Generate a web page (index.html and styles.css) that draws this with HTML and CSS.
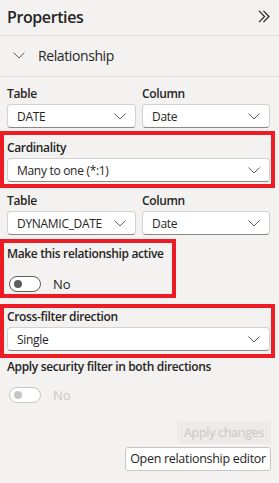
FILE: index.html
```html
<!DOCTYPE html>
<html lang="en">
<head>
<meta charset="utf-8">
<title>Properties</title>
<link rel="stylesheet" href="styles.css">
</head>
<body>
<div class="pane">
  <div class="header">
    <span class="title">Properties</span>
    <svg class="collapse" width="13" height="13" viewBox="0 0 13 13"><path d="M1 0.8 L6.6 6.5 L1 12.2 M5.4 0.8 L11 6.5 L5.4 12.2" fill="none" stroke="#252423" stroke-width="1.2"/></svg>
  </div>
  <div class="section-head">
    <svg class="chev-down" width="12" height="7" viewBox="0 0 12 7"><path d="M0.5 0.5 L6 6 L11.5 0.5" fill="none" stroke="#605e5c" stroke-width="1"/></svg>
    <span class="section-title">Relationship</span>
  </div>
  <div class="content">
    <div class="pair first">
      <div class="field">
        <div class="label">Table</div>
        <div class="select"><span>DATE</span><svg class="chev" width="12" height="7" viewBox="0 0 12 7"><path d="M0.5 0.5 L6 6 L11.5 0.5" fill="none" stroke="#605e5c" stroke-width="1"/></svg></div>
      </div>
      <div class="field">
        <div class="label">Column</div>
        <div class="select"><span>Date</span><svg class="chev" width="12" height="7" viewBox="0 0 12 7"><path d="M0.5 0.5 L6 6 L11.5 0.5" fill="none" stroke="#605e5c" stroke-width="1"/></svg></div>
      </div>
    </div>

    <div class="highlight wide card">
      <div class="label">Cardinality</div>
      <div class="select"><span>Many to one (*:1)</span><svg class="chev" width="12" height="7" viewBox="0 0 12 7"><path d="M0.5 0.5 L6 6 L11.5 0.5" fill="none" stroke="#605e5c" stroke-width="1"/></svg></div>
    </div>

    <div class="pair second">
      <div class="field">
        <div class="label">Table</div>
        <div class="select"><span>DYNAMIC_DATE</span><svg class="chev" width="12" height="7" viewBox="0 0 12 7"><path d="M0.5 0.5 L6 6 L11.5 0.5" fill="none" stroke="#605e5c" stroke-width="1"/></svg></div>
      </div>
      <div class="field">
        <div class="label">Column</div>
        <div class="select"><span>Date</span><svg class="chev" width="12" height="7" viewBox="0 0 12 7"><path d="M0.5 0.5 L6 6 L11.5 0.5" fill="none" stroke="#605e5c" stroke-width="1"/></svg></div>
      </div>
    </div>

    <div class="highlight narrow active">
      <div class="label">Make this relationship active</div>
      <div class="toggle-row">
        <span class="toggle"><span class="knob"></span></span>
        <span class="toggle-text">No</span>
      </div>
    </div>

    <div class="highlight wide cross">
      <div class="label">Cross-filter direction</div>
      <div class="select"><span>Single</span><svg class="chev" width="12" height="7" viewBox="0 0 12 7"><path d="M0.5 0.5 L6 6 L11.5 0.5" fill="none" stroke="#605e5c" stroke-width="1"/></svg></div>
    </div>

    <div class="security">
      <div class="label">Apply security filter in both directions</div>
      <div class="toggle-row disabled">
        <span class="toggle"><span class="knob"></span></span>
        <span class="toggle-text">No</span>
      </div>
    </div>

    <div class="actions">
      <button class="btn apply" disabled>Apply changes</button>
      <button class="btn editor">Open relationship editor</button>
    </div>
  </div>
</div>
</body>
</html>
```
FILE: styles.css
```css
* { box-sizing: border-box; }
html, body { margin: 0; padding: 0; }
body {
  background: #f3f2f1;
  font-family: "Open Sans", "Noto Sans", sans-serif;
  color: #252423;
  width: 279px;
  height: 483px;
  overflow: hidden;
}
.pane { width: 279px; }
.header {
  height: 36px;
  display: flex;
  align-items: center;
  justify-content: space-between;
  padding: 0 8px 1px 7px;
  border-bottom: 1px solid #e1dfdd;
}
.title {
  font-size: 16px;
  font-weight: 600;
  letter-spacing: -0.4px;
  line-height: 20px;
}
.collapse { display: block; margin-top: -1px; }
.section-head {
  height: 41px;
  display: flex;
  align-items: center;
  padding: 0 0 1px 13px;
  border-bottom: 1px solid #e1dfdd;
}
.chev-down { display: block; margin-right: 13px; }
.section-title {
  font-size: 14px;
  line-height: 20px;
  letter-spacing: -0.4px;
}
.content {
  padding: 0 9px 0 7px;
  display: flex;
  flex-direction: column;
}
.pair {
  display: grid;
  grid-template-columns: 129px 128px;
  column-gap: 6px;
}
.pair.first { margin-top: 8px; }
.pair.second { margin-top: 8px; }
.field { display: flex; flex-direction: column; }
.label {
  font-size: 12px;
  font-weight: 600;
  line-height: 17px;
  letter-spacing: -0.35px;
  white-space: nowrap;
}
.select {
  margin-top: 2px;
  height: 24px;
  background: #fff;
  border: 1px solid #d1d1d1;
  border-bottom-color: #8a8886;
  border-radius: 4px;
  display: flex;
  align-items: center;
  justify-content: space-between;
  padding: 0 9px 0 9px;
  font-size: 12px;
  letter-spacing: -0.3px;
  white-space: nowrap;
}
.chev { display: block; flex: none; }
.highlight {
  outline: 4px solid #ed1c24;
  margin-left: -3px;
  padding-left: 3px;
}
.highlight.wide { margin-right: -1px; padding-right: 1px; }
.highlight.narrow { width: 168px; }
.card { margin-top: 7px; padding-top: 4px; padding-bottom: 2px; }
.active { margin-top: 8px; padding-top: 2px; height: 51px; }
.cross { margin-top: 14px; padding-bottom: 3px; }
.toggle-row {
  display: flex;
  align-items: center;
  margin-top: 14px;
  padding-left: 2px;
}
.toggle {
  width: 32px;
  height: 16px;
  border: 1px solid #605e5c;
  border-radius: 8px;
  background: #fff;
  display: flex;
  align-items: center;
  padding-left: 4px;
}
.knob {
  width: 8px;
  height: 8px;
  border-radius: 50%;
  background: #605e5c;
}
.toggle-text {
  font-size: 13px;
  margin-left: 12px;
  line-height: 16px;
}
.security { margin-top: 4px; }
.security .toggle-row { margin-top: 12px; }
.disabled .toggle { border-color: #c8c6c4; }
.disabled .knob { background: #c8c6c4; }
.disabled .toggle-text { color: #c8c6c4; }
.actions {
  display: flex;
  flex-direction: column;
  align-items: flex-end;
  margin-top: 18px;
  margin-right: -1px;
}
.btn {
  font-family: "Open Sans", "Noto Sans", sans-serif;
  font-size: 12.5px;
  letter-spacing: -0.3px;
  height: 23px;
  border-radius: 3px;
  padding: 0;
  line-height: 20px;
  white-space: nowrap;
  text-align: center;
}
.apply {
  background: #edebe9;
  border: 1px solid #edebe9;
  color: #c8c6c4;
  width: 94px;
}
.editor {
  margin-top: 3px;
  height: 24px;
  background: #fff;
  border: 1px solid #c8c6c4;
  color: #252423;
  width: 146px;
}
```
